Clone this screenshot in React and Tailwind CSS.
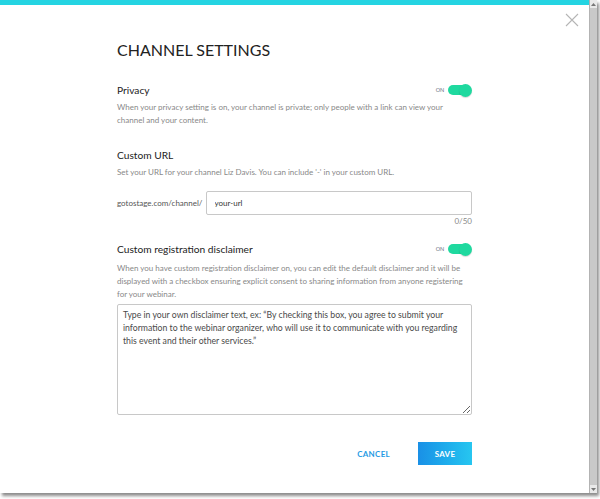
import { useState } from "react";

function Toggle({ on, onChange }) {
  return (
    <div className="flex items-center gap-[4px] mr-[2px]">
      <span className="text-[5.5px] text-gray-500 tracking-tight">ON</span>
      <button
        onClick={onChange}
        className={`relative w-[22px] h-[10px] rounded-full ${on ? "bg-[#1fd99f]" : "bg-gray-300"}`}
      >
        <span
          className={`absolute top-[-1.5px] w-[13px] h-[13px] rounded-full shadow-[0_1px_1px_rgba(0,0,0,0.15)] ${
            on ? "right-[-2px] bg-[#1fd99f]" : "left-[-2px] bg-white"
          }`}
        />
      </button>
    </div>
  );
}

export default function App() {
  const [privacy, setPrivacy] = useState(true);
  const [disclaimer, setDisclaimer] = useState(true);
  const [url, setUrl] = useState("your-url");

  return (
    <div className="w-[600px] h-[499px] bg-white font-['Lato','Open_Sans',sans-serif] overflow-hidden">
      <div className="w-[597px] h-[493px] flex shadow-[2px_3px_3px_rgba(0,0,0,0.45)]">
        <div className="relative flex-1 bg-white flex flex-col">
          <div className="h-[5px] bg-[#24d4e2]" />
          <button className="absolute right-[10px] top-[13px] text-[#b5b5b5]">
            <svg width="14" height="14" viewBox="0 0 14 14" stroke="currentColor" strokeWidth="1.1">
              <path d="M1 1L13 13M13 1L1 13" />
            </svg>
          </button>

          <div className="px-[117px] flex flex-col text-[#222]">
            <h1 className="mt-[35px] text-[16px] leading-[20px]">CHANNEL SETTINGS</h1>

            <div className="mt-[23px] h-[14px] flex items-center justify-between">
              <h2 className="text-[10.2px] leading-[14px]">Privacy</h2>
              <Toggle on={privacy} onChange={() => setPrivacy(!privacy)} />
            </div>
            <p className="mt-[4px] text-[8px] leading-[13px] text-[#888]">
              When your privacy setting is on, your channel is private; only people with a link can view your
              channel and your content.
            </p>

            <h2 className="mt-[21px] text-[10.2px] leading-[14px]">Custom URL</h2>
            <p className="mt-[4px] text-[8px] leading-[13px] text-[#888]">
              Set your URL for your channel Liz Davis. You can include '-' in your custom URL.
            </p>

            <div className="mt-[12px] flex items-center">
              <span className="text-[8px] text-[#555] mr-[3px]">gotostage.com/channel/</span>
              <input
                value={url}
                onChange={(e) => setUrl(e.target.value)}
                className="flex-1 h-[24px] border border-[#c8c8c8] rounded-[2px] px-[8px] text-[8px] text-[#333] outline-none"
              />
            </div>
            <div className="mt-[1px] text-right text-[8px] leading-[10px] text-[#888]">{url === "your-url" ? 0 : url.length}/50</div>

            <div className="mt-[16px] h-[14px] flex items-center justify-between">
              <h2 className="text-[10.2px] leading-[14px]">Custom registration disclaimer</h2>
              <Toggle on={disclaimer} onChange={() => setDisclaimer(!disclaimer)} />
            </div>
            <p className="mt-[6px] text-[8px] leading-[13px] text-[#888]">
              When you have custom registration disclaimer on, you can edit the default disclaimer and it will be
              displayed with a checkbox ensuring explicit consent to sharing information from anyone registering
              for your webinar.
            </p>

            <textarea
              className="mt-[3px] h-[111px] border border-[#c8c8c8] rounded-[2px] px-[5px] py-[3px] text-[8.7px] leading-[13px] text-[#4a4a4a] placeholder:text-[#4a4a4a] outline-none resize-y"
              placeholder={"Type in your own disclaimer text, ex: \u201cBy checking this box, you agree to submit your information to the webinar organizer, who will use it to communicate with you regarding this event and their other services.\u201d"}
            />

            <div className="mt-[27px] flex items-center justify-end">
              <button className="text-[8px] font-bold tracking-[0.3px] text-[#1f9be4] mr-[28px]">CANCEL</button>
              <button className="w-[54px] h-[23px] text-[8px] font-bold tracking-[0.3px] text-white bg-gradient-to-r from-[#1a90e6] to-[#27c6f0]">
                SAVE
              </button>
            </div>
          </div>
        </div>
        <div className="w-[8px] flex flex-col bg-[#c9c9c9] border-l border-[#b3b3b3]">
          <div className="h-[8px] bg-[#e9e9e9] flex items-center justify-center">
            <svg width="5" height="3" viewBox="0 0 5 3"><path d="M0 3L2.5 0L5 3Z" fill="#777" /></svg>
          </div>
          <div className="flex-1" />
          <div className="h-[8px] bg-[#e9e9e9] flex items-center justify-center">
            <svg width="5" height="3" viewBox="0 0 5 3"><path d="M0 0L2.5 3L5 0Z" fill="#777" /></svg>
          </div>
        </div>
      </div>
    </div>
  );
}
